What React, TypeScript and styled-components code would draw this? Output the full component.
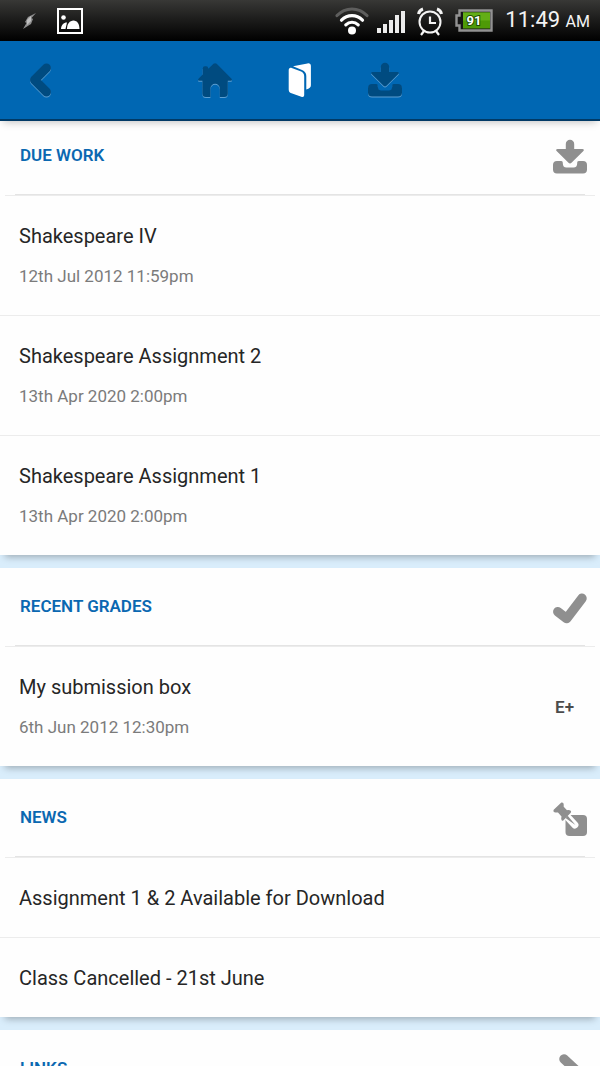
import React from "react";
import styled, { createGlobalStyle } from "styled-components";

const GlobalStyle = createGlobalStyle`
  * { box-sizing: border-box; }
  body { margin: 0; background: #d9edfb; font-family: Roboto, "Liberation Sans", sans-serif; }
  h1, h2, p, ul { margin: 0; padding: 0; }
  button { border: 0; padding: 0; background: none; cursor: pointer; }
  svg { display: block; overflow: visible; }
`;

const Screen = styled.div`
  height: 100vh;
  display: flex;
  flex-direction: column;
  overflow: hidden;
`;

const TopBars = styled.header`
  flex: none;
  position: relative;
  z-index: 1;
  box-shadow: 0 4px 8px -3px rgba(0, 0, 0, 0.25);
`;

const StatusBar = styled.div`
  height: 41px;
  padding: 0 10px 0 20px;
  display: flex;
  align-items: center;
  justify-content: space-between;
  color: #f4f4f4;
  background: linear-gradient(#383836, #1b1b1a 50%, #000);
`;

const StatusGroup = styled.div<{ $gap: number }>`
  display: flex;
  align-items: center;
  gap: ${(p) => p.$gap}px;
`;

const Clock = styled.time`
  font-size: 22px;
  line-height: 28px;
  small { font-size: 16px; }
`;

const NavBar = styled.nav`
  height: 80px;
  padding: 0 28px;
  display: grid;
  grid-template-columns: 1fr auto 1fr;
  align-items: center;
  background: #0067b3;
  border-bottom: 2px solid #013a66;
`;

const NavTabs = styled.div`
  display: flex;
  gap: 41px;
`;

const NavButton = styled.button<{ $active?: boolean }>`
  width: 44px;
  height: 44px;
  display: grid;
  place-items: center;
  color: ${(p) => (p.$active ? "#fff" : "#004b80")};
  filter: ${(p) => (p.$active ? "none" : "drop-shadow(0 1px 0 #5c9fd1)")};
`;

const BackButton = styled(NavButton)`
  width: 24px;
`;

const Feed = styled.main`
  flex: 1;
  min-height: 0;
  margin-top: -4px;
  overflow-y: auto;
  scrollbar-width: none;
`;

const Card = styled.section`
  position: relative;
  margin-bottom: 13px;
  background: #fefefe;
  box-shadow: 0 7px 7px -5px rgba(0, 0, 0, 0.28);
`;

const CardHeader = styled.div`
  height: 79px;
  padding: 0 13px 0 20px;
  display: flex;
  align-items: center;
  justify-content: space-between;
  color: #8f8f8f;
  background:
    linear-gradient(#e4e4e4, #e4e4e4) center bottom 1px / calc(100% - 30px) 1px no-repeat,
    linear-gradient(#ececec, #ececec) center bottom / calc(100% - 10px) 1px no-repeat;
`;

const CardTitle = styled.h2`
  margin-bottom: 3px;
  color: #0b68b1;
  font-size: 17px;
  line-height: 20px;
  font-weight: 600;
`;

const Rows = styled.ul`
  list-style: none;
`;

const Row = styled.li`
  padding: 26px 26px 25px 19px;
  display: flex;
  align-items: center;
  justify-content: space-between;
  & + & { border-top: 1px solid #ececec; }
`;

const RowTitle = styled.p`
  color: #262626;
  font-size: 20px;
  line-height: 28px;
`;

const RowDate = styled.p`
  margin: 14px 0 2px;
  color: #7b7b7b;
  font-size: 17px;
  line-height: 24px;
`;

const Grade = styled.strong`
  color: #4c4c4c;
  font-size: 17px;
  line-height: 24px;
  font-weight: 600;
`;

const DownloadIcon = () => (
  <svg width="34" height="34" viewBox="0 0 34 34" fill="currentColor" aria-hidden="true">
    <path d="M12.8 4a4.2 4.2 0 0 1 8.4 0v5h8.2c1.5 0 2 1.1 1 2.1L18.5 22.7c-1 .9-2 .9-3 0L3.6 11.1c-1-1-.5-2.1 1-2.1h8.2z" />
    <path d="M4 21h4.2c1.2 0 1.6.9 1.6 2.3 0 2.8 1.2 4.2 3.6 4.2h7.2c2.4 0 3.6-1.4 3.6-4.2 0-1.4.4-2.3 1.6-2.3H30a4 4 0 0 1 4 4v4.5a4 4 0 0 1-4 4H4a4 4 0 0 1-4-4V25a4 4 0 0 1 4-4z" />
  </svg>
);

const CheckIcon = () => (
  <svg width="34" height="34" viewBox="0 0 34 34" fill="none" stroke="currentColor" strokeWidth="9.5" strokeLinecap="round" strokeLinejoin="round" aria-hidden="true">
    <path d="M4.8 20.7 13.6 27.6 29 7.3" />
  </svg>
);

const PinIcon = () => (
  <svg width="34" height="34" viewBox="0 0 34 34" fill="currentColor" aria-hidden="true">
    <rect x="12.5" y="13" width="21.5" height="21" rx="4" />
    <path d="m14.5 15 7.4 8" stroke="#fefefe" strokeWidth="7" strokeLinecap="round" />
    <path d="M7.800.900C9.300 0 10.700.8 10.700 2.500v2.200l3.300 3.500c1.600-.3 2.900-.2 3.700.6.600.7.500 1.500-.2 2.200l-7 7.300c-.8.700-1.600.7-2-.2-.4-1.100-.4-2.300 0-3.700L5 10.500H2.600C.8 10.500-.1 9 .7 7.700z" />
    <path d="m12.500 16 2.200-2.200 7.700 9.300z" />
  </svg>
);

const LinkIcon = () => (
  <svg width="34" height="34" viewBox="0 0 34 34" fill="none" stroke="currentColor" strokeLinecap="round" strokeLinejoin="round" aria-hidden="true">
    <path d="m11 6 14 13L11 31" strokeWidth="9.5" />
  </svg>
);

const BackIcon = () => (
  <svg width="24" height="36" viewBox="0 0 24 36" fill="none" stroke="currentColor" strokeWidth="9" strokeLinecap="round" strokeLinejoin="round" aria-hidden="true">
    <path d="M18.5 6 6.5 18l12 12" />
  </svg>
);

const HomeIcon = () => (
  <svg width="34" height="34" viewBox="0 0 34 34" fill="currentColor" aria-hidden="true">
    <path d="M15.5.8c1-.9 2.2-.9 3.2 0l14.6 14.7c1.2 1.3.8 2.3-.8 2.3H29.8v12.7a3.5 3.5 0 0 1-3.5 3.5H21.8v-8.500a4.700 4.700 0 0 0-9.400 0V34H7.900a3.500 3.500 0 0 1-3.500-3.500V17.800H1.500c-1.600 0-2-1-.8-2.300l4-4V5.400A2.200 2.200 0 0 1 6.900 3.200h1.200a2.200 2.200 0 0 1 2.200 2.200v.4z" />
  </svg>
);

const PagesIcon = () => (
  <svg width="24" height="35" viewBox="0 0 24 35" fill="currentColor" aria-hidden="true">
    <path d="M.7 7.2c0-2 1.2-2.9 3-2.300l8.800 3.400c2.400.9 3.700 2.600 3.700 5v18.500c0 1.900-1.100 2.700-2.900 2L3.500 30.200C1.600 29.500.7 28.400.7 26.400z" />
    <path d="M5 3.200 19.500.4c2-.4 3.400.6 3.400 2.500v19.400c0 2-1.500 3.600-4.600 4.100V13.100c0-3.100-1.400-5-4.300-6.200z" />
  </svg>
);

const BoltIcon = () => (
  <svg width="16" height="18" viewBox="0 0 16 18" aria-hidden="true">
    <path d="M16 1 8 5 5 10 6.500 11 3 17 11 12 13 7 11.500 6z" fill="#8e8e8e" />
    <path d="m11 4-4 4v5l4-4z" fill="#c0c0c0" />
  </svg>
);

const PictureIcon = () => (
  <svg width="26" height="26" viewBox="0 0 26 26" fill="#fff" aria-hidden="true">
    <rect x="1" y="1" width="24" height="24" fill="none" stroke="#fff" strokeWidth="2" />
    <circle cx="6.5" cy="9.5" r="2.3" />
    <path d="M4 21c.3-4 2.5-6.500 6-6.500L8.500 21zM10 21c0-5 2.700-8.500 6.500-8.500S22.500 16 22.500 21z" />
  </svg>
);

const WifiIcon = () => (
  <svg width="34" height="28" viewBox="0 0 34 28" fill="none" strokeWidth="3.2" strokeLinecap="round" aria-hidden="true">
    <path d="M2 8.500C10.500-.2 23.500-.2 32 8.500" stroke="#5e5e5d" />
    <path d="M6.500 13.200c6-6 15-6 21 0" stroke="#fff" />
    <path d="M10.800 17.800c3.600-3.400 8.800-3.400 12.400 0" stroke="#fff" />
    <circle cx="17" cy="23.500" r="4" fill="#fff" />
  </svg>
);

const SignalIcon = () => (
  <svg width="28" height="24" viewBox="0 0 28 24" fill="#ececec" aria-hidden="true">
    <path d="M0 19h4v5H0zM6 15h4v9H6zM12 11h4v13h-4zM18 6h4v18h-4zM24 2h4v22h-4z" />
  </svg>
);

const AlarmIcon = () => (
  <svg width="26" height="28" viewBox="0 0 26 28" fill="none" stroke="#f4f4f4" strokeWidth="2" aria-hidden="true">
    <circle cx="13" cy="15" r="10.500" />
    <path d="M13 9.500v6.500h6M7 24l-3 4M19 24l3 4" strokeWidth="2.200" />
    <path d="M1.500 7c.5-2.500 2-4.200 4.500-5M24.500 7c-.5-2.500-2-4.200-4.500-5" strokeWidth="3" />
  </svg>
);

const BatteryIcon = () => (
  <svg width="38" height="23" viewBox="0 0 38 23" aria-hidden="true">
    <path d="M4.500 1.500h32v20h-32v-5h-3v-10h3z" fill="#161616" stroke="#929292" strokeWidth="2.400" />
    <path d="M8 3.500h27v16H8z" fill="#4e9a07" />
    <path d="M8 3.500h27v8H8z" fill="#63ae16" />
    <text x="19" y="16" textAnchor="middle" fontFamily="Roboto, sans-serif" fontSize="13" fontWeight="700" fill="#fff" stroke="#1e4d00" strokeWidth="2" paintOrder="stroke">91</text>
  </svg>
);

type Item = { title: string; date?: string; grade?: string };
type Section = { title: string; icon: React.ReactNode; items: Item[] };

const sections: Section[] = [
  {
    title: "DUE WORK",
    icon: <DownloadIcon />,
    items: [
      { title: "Shakespeare IV", date: "12th Jul 2012 11:59pm" },
      { title: "Shakespeare Assignment 2", date: "13th Apr 2020 2:00pm" },
      { title: "Shakespeare Assignment 1", date: "13th Apr 2020 2:00pm" },
    ],
  },
  {
    title: "RECENT GRADES",
    icon: <CheckIcon />,
    items: [{ title: "My submission box", date: "6th Jun 2012 12:30pm", grade: "E+" }],
  },
  {
    title: "NEWS",
    icon: <PinIcon />,
    items: [
      { title: "Assignment 1 & 2 Available for Download" },
      { title: "Class Cancelled - 21st June" },
    ],
  },
  { title: "LINKS", icon: <LinkIcon />, items: [] },
];

export default function App() {
  return (
    <>
      <GlobalStyle />
      <Screen>
        <TopBars>
          <StatusBar>
            <StatusGroup $gap={21}>
              <BoltIcon />
              <PictureIcon />
            </StatusGroup>
            <StatusGroup $gap={12}>
              <StatusGroup $gap={8}>
                <WifiIcon />
                <SignalIcon />
              </StatusGroup>
              <AlarmIcon />
              <BatteryIcon />
              <Clock>
                11:49 <small>AM</small>
              </Clock>
            </StatusGroup>
          </StatusBar>
          <NavBar>
            <BackButton aria-label="Back">
              <BackIcon />
            </BackButton>
            <NavTabs>
              <NavButton aria-label="Home">
                <HomeIcon />
              </NavButton>
              <NavButton aria-label="Courses" $active>
                <PagesIcon />
              </NavButton>
              <NavButton aria-label="Downloads">
                <DownloadIcon />
              </NavButton>
            </NavTabs>
          </NavBar>
        </TopBars>
        <Feed>
          {sections.map((section) => (
            <Card key={section.title}>
              <CardHeader>
                <CardTitle>{section.title}</CardTitle>
                {section.icon}
              </CardHeader>
              <Rows>
                {section.items.map((item) => (
                  <Row key={item.title}>
                    <div>
                      <RowTitle>{item.title}</RowTitle>
                      {item.date && <RowDate>{item.date}</RowDate>}
                    </div>
                    {item.grade && <Grade>{item.grade}</Grade>}
                  </Row>
                ))}
              </Rows>
            </Card>
          ))}
        </Feed>
      </Screen>
    </>
  );
}
